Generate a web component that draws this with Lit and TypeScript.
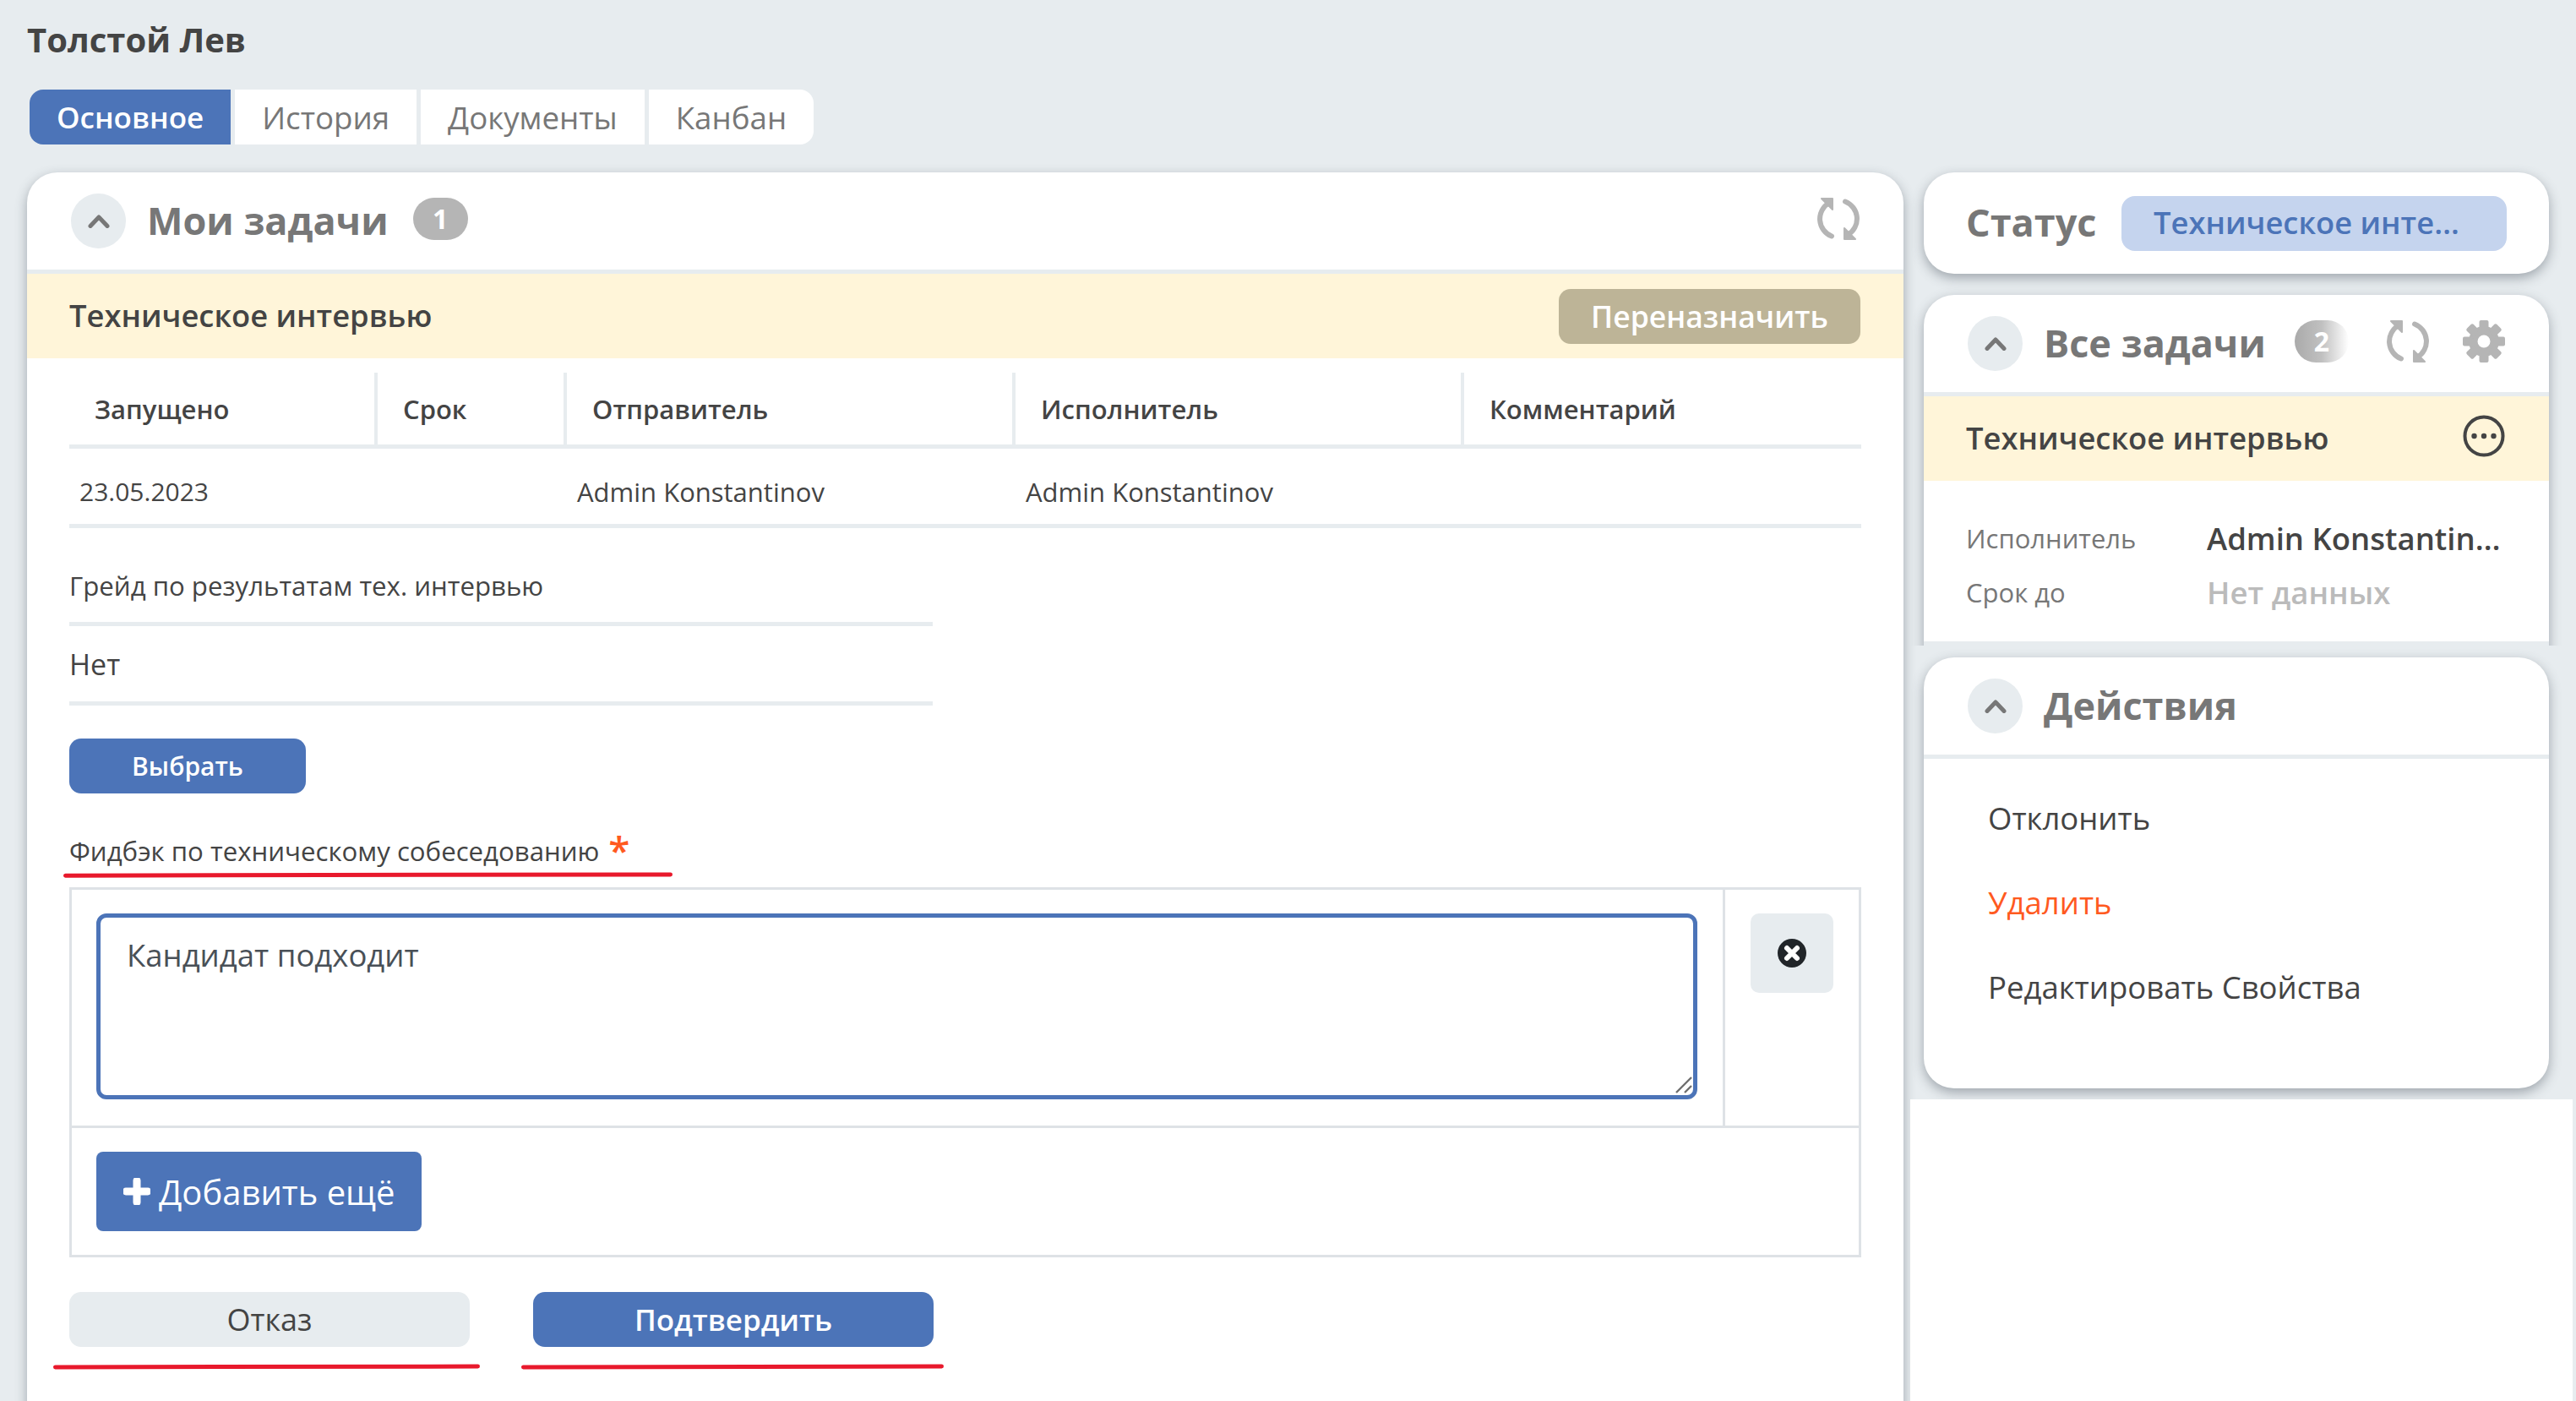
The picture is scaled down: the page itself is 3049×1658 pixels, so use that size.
import { LitElement, html, css, svg } from 'lit';
import { customElement } from 'lit/decorators.js';

const refreshIcon = html`<svg class="ico" viewBox="0 0 50 50" fill="none">
  <g>
    <path d="M14 6A22 22 0 0 0 17 45.5" stroke="#b5b5b5" stroke-width="6" stroke-linecap="round"></path>
    <path d="M5 1H18V14Z" fill="#b5b5b5" stroke="#b5b5b5" stroke-width="2" stroke-linejoin="round"></path>
  </g>
  <g transform="rotate(180 25 25)">
    <path d="M14 6A22 22 0 0 0 17 45.5" stroke="#b5b5b5" stroke-width="6" stroke-linecap="round"></path>
    <path d="M5 1H18V14Z" fill="#b5b5b5" stroke="#b5b5b5" stroke-width="2" stroke-linejoin="round"></path>
  </g>
</svg>`;

const gearIcon = html`<svg class="ico" viewBox="0 0 50 50">
  <circle cx="25" cy="25" r="18" fill="#b5b5b5"></circle>
  ${[0, 45, 90, 135, 180, 225, 270, 315].map(
    (a) => svg`<rect x="19.5" y="0" width="11" height="12" rx="2" fill="#b5b5b5" transform="rotate(${a} 25 25)"></rect>`
  )}
  <circle cx="25" cy="25" r="7.5" fill="#fff"></circle>
</svg>`;

const chevron = html`<svg class="chev" viewBox="0 0 26 16" fill="none">
  <path d="M3 13.5L13 3L23 13.5" stroke="#777" stroke-width="5" stroke-linecap="round" stroke-linejoin="round"></path>
</svg>`;

@customElement('app-root')
export class AppRoot extends LitElement {
  static styles = css`
    :host {
      display: block;
      width: 3049px;
      height: 1658px;
      overflow: hidden;
      background: #e7ecef;
      font-family: 'Open Sans', 'Noto Sans', sans-serif;
      color: #444;
      --blue: #4c74b8;
      --line: #e7ecef;
      --cream: #fff5d9;
      --shadow: 0 5px 14px rgba(60, 70, 80, 0.42);
    }
    * { box-sizing: border-box; }

    .person {
      height: 106px;
      padding: 27px 0 0 32px;
      font-size: 40px;
      line-height: 40px;
      font-weight: 700;
      color: #444;
    }
    .tabs { display: flex; gap: 5px; margin-left: 35px; height: 65px; }
    .tab {
      display: flex;
      align-items: center;
      padding: 0 32px;
      background: #fff;
      color: #777;
      font-size: 36.7px;
    }
    .tab.active { background: var(--blue); color: #fff; font-size: 35px; font-weight: 600; border-radius: 16px 0 0 16px; }
    .tab:last-child { border-radius: 0 16px 16px 0; }

    .columns { display: flex; margin-top: 33px; align-items: flex-start; }

    .card { background: #fff; border-radius: 36px; box-shadow: var(--shadow); overflow: hidden; }
    .main { width: 2221px; margin-left: 32px; min-height: 1500px; flex: none; }

    .head {
      display: flex;
      align-items: center;
      height: 120px;
      padding: 0 52px;
      border-bottom: 5px solid var(--line);
    }
    .collapse {
      width: 65px;
      height: 65px;
      border-radius: 50%;
      background: var(--line);
      display: flex;
      align-items: center;
      justify-content: center;
      flex: none;
    }
    .chev { width: 26px; height: 16px; }
    .head-title { margin: -3px 0 0 25px; font-size: 45px; font-weight: 700; color: #777; white-space: nowrap; }
    .count {
      width: 65px;
      height: 50px;
      margin-left: 29px;
      margin-top: -6px;
      border-radius: 25px;
      background: #b5b5b5;
      color: #fff;
      font-size: 32px;
      font-weight: 700;
      display: flex;
      align-items: center;
      justify-content: center;
    }
    .count.fade { background: linear-gradient(90deg, #aaa 0%, #c0c0c0 50%, #fff 100%); margin-left: 34px; width: 64px; }
    .spacer { flex: 1; }
    .ico { width: 50px; height: 50px; flex: none; margin-top: -6px; }

    .task-bar {
      display: flex;
      align-items: center;
      justify-content: space-between;
      height: 100px;
      background: var(--cream);
      padding: 0 51px 0 50px;
      font-size: 36.3px;
      font-weight: 600;
      color: #444;
    }
    .task-bar > span { margin-top: -3px; }
    .reassign {
      width: 357px;
      height: 65px;
      border-radius: 14px;
      background: #bdb497;
      color: #fff;
      display: flex;
      align-items: center;
      justify-content: center;
      font-size: 35.5px;
      font-weight: 600;
    }

    .table { margin: 17px 50px 0; }
    .tr { display: grid; grid-template-columns: 365px 224px 531px 531px 1fr; }
    .th {
      height: 85px;
      padding: 0 0 0 30px;
      display: flex;
      align-items: center;
      font-size: 31px;
      font-weight: 600;
      border-right: 4px solid var(--line);
    }
    .th:last-child { border-right: 0; }
    .tr.top { border-bottom: 5px solid var(--line); }
    .tr.body { border-bottom: 5px solid var(--line); height: 94px; padding-top: 12px; }
    .td { padding-left: 12px; display: flex; align-items: center; font-size: 31px; }
    .td.date { font-size: 30px; }

    .body-pad { padding: 0 50px; }
    .field { width: 1022px; }
    .field-label {
      margin-top: 48px;
      line-height: 40px;
      font-size: 31.2px;
      font-weight: 500;
    }
    .field .field-label { padding-bottom: 23px; border-bottom: 5px solid var(--line); height: 68px; }
    .field-value {
      height: 94px;
      border-bottom: 5px solid var(--line);
      display: flex;
      align-items: center;
      font-size: 34px;
    }
    .btn {
      height: 65px;
      border-radius: 14px;
      display: flex;
      align-items: center;
      justify-content: center;
      font-size: 30px;
      font-weight: 600;
    }
    .btn.blue { background: var(--blue); color: #fff; }
    .pick { width: 280px; margin-top: 39px; }

    .required { position: relative; width: max-content; padding-right: 87px; }
    .star { position: absolute; right: 51px; top: -5px; color: #ff5a1f; font-size: 46px; font-weight: 600; line-height: 46px; }
    .marked { position: relative; }
    .marked::after {
      content: '';
      position: absolute;
      height: 5px;
      border-radius: 3px;
      background: #e8192c;
      transform: rotate(-0.1deg);
    }
    .required.marked::after { left: -7px; right: 0; bottom: -11px; }

    .repeat {
      margin-top: 23px;
      border: 3px solid #dee2e6;
      display: grid;
      grid-template-columns: 1957px 1fr;
      width: 2121px;
    }
    .cell-text { padding: 28px 29px; border-right: 3px solid #dee2e6; border-bottom: 3px solid #dee2e6; height: 282px; }
    .cell-del { padding: 28px 0 28px 30px; border-bottom: 3px solid #dee2e6; }
    .ta-wrap { position: relative; width: 1895px; height: 220px; }
    .grip { position: absolute; right: 5px; bottom: 5px; width: 30px; height: 30px; }
    textarea {
      display: block;
      width: 100%;
      height: 100%;
      border: 5px solid var(--blue);
      border-radius: 12px;
      padding: 18px 31px;
      font: 36.5px/52px 'Open Sans', sans-serif;
      color: #495057;
      outline: none;
      resize: none;
    }
    .del {
      width: 98px;
      height: 94px;
      border-radius: 10px;
      background: var(--line);
      display: flex;
      align-items: center;
      justify-content: center;
    }
    .del svg { width: 34px; height: 34px; }
    .cell-add { grid-column: 1 / 3; padding: 28px 29px 28px; height: 150px; }
    .add {
      width: 385px;
      height: 94px;
      border-radius: 8px;
      background: var(--blue);
      color: #fff;
      display: flex;
      align-items: center;
      padding-left: 32px;
      gap: 10px;
      font-size: 40px;
    }
    .add svg { width: 32px; height: 32px; flex: none; }

    .actions { display: flex; gap: 75px; margin-top: 41px; }
    .actions .btn { width: 474px; font-size: 35px; }
    .actions .btn.grey { background: var(--line); font-weight: 500; font-size: 36px; }
    .actions .marked::after { height: 5px; bottom: -26px; left: -19px; right: -12px; }
    .actions .blue.marked::after { left: -14px; }

    .side { width: 784px; margin-left: 8px; flex: none; height: 1454px; display: flex; flex-direction: column; }
    .side-card { margin: 0 28px 0 16px; flex: none; }
    .status {
      height: 120px;
      display: flex;
      align-items: center;
      padding: 0 50px;
    }
    .status-label { width: 184px; flex: none; font-size: 45px; font-weight: 700; color: #777; margin-top: -3px; }
    .pill {
      width: 456px;
      height: 65px;
      padding: 0 37px 0 38px;
      border-radius: 16px;
      background: #c5d4ee;
      color: var(--blue);
      font-size: 36.3px;
      font-weight: 600;
      line-height: 63px;
      white-space: nowrap;
      overflow: hidden;
      text-overflow: ellipsis;
    }
    .clip { margin-top: 9px; height: 431px; flex: none; overflow: hidden; padding: 16px 28px 0 16px; }
    .clip .card { height: 460px; }
    .tasks .ico + .ico { margin-left: 40px; }
    .kebab { width: 50px; height: 50px; flex: none; margin-top: -6px; margin-right: 1px; }
    .details { height: 195px; padding: 36px 50px 0; border-bottom: 5px solid var(--line); }
    .dl { display: grid; grid-template-columns: 285px 348px; height: 64px; align-items: center; }
    .dt { font-size: 31px; color: #777; }
    .dd { font-size: 36.5px; font-weight: 600; color: #444; white-space: nowrap; overflow: hidden; text-overflow: ellipsis; }
    .dd.empty { color: #bbb; }

    .actions-card { margin-top: 14px; height: 510px; }
    .menu { padding: 20px 0 0 76px; }
    .menu div { height: 100px; display: flex; align-items: center; font-size: 36.5px; color: #444; }
    .menu .danger { color: #ff5a1f; }

    .blank { background: #fff; flex: 1; margin-top: 13px; }
  `;

  render() {
    return html`
      <div class="person">Толстой Лев</div>
      <div class="tabs">
        <div class="tab active">Основное</div>
        <div class="tab">История</div>
        <div class="tab">Документы</div>
        <div class="tab">Канбан</div>
      </div>
      <div class="columns">
        <section class="card main">
          <div class="head">
            <div class="collapse">${chevron}</div>
            <div class="head-title">Мои задачи</div>
            <div class="count">1</div>
            <div class="spacer"></div>
            ${refreshIcon}
          </div>
          <div class="task-bar">
            <span>Техническое интервью</span>
            <div class="reassign">Переназначить</div>
          </div>
          <div class="table">
            <div class="tr top">
              <div class="th">Запущено</div>
              <div class="th">Срок</div>
              <div class="th">Отправитель</div>
              <div class="th">Исполнитель</div>
              <div class="th">Комментарий</div>
            </div>
            <div class="tr body">
              <div class="td date">23.05.2023</div>
              <div class="td"></div>
              <div class="td">Admin Konstantinov</div>
              <div class="td">Admin Konstantinov</div>
              <div class="td"></div>
            </div>
          </div>
          <div class="body-pad">
            <div class="field">
              <div class="field-label">Грейд по результатам тех. интервью</div>
              <div class="field-value">Нет</div>
            </div>
            <div class="btn blue pick">Выбрать</div>
            <div class="field-label required marked">
              Фидбэк по техническому собеседованию<span class="star">*</span>
            </div>
            <div class="repeat">
              <div class="cell-text">
                <div class="ta-wrap">
                  <textarea readonly>Кандидат подходит</textarea>
                  <svg class="grip" viewBox="0 0 30 30" fill="none">
                    <path d="M28 9L10 27M28 19L20 27" stroke="#6e6e6e" stroke-width="2.4"></path>
                  </svg>
                </div>
              </div>
              <div class="cell-del">
                <div class="del">
                  <svg viewBox="0 0 34 34">
                    <circle cx="17" cy="17" r="17" fill="#212529"></circle>
                    <path d="M11 11L23 23M23 11L11 23" stroke="#fff" stroke-width="6" stroke-linecap="round"></path>
                  </svg>
                </div>
              </div>
              <div class="cell-add">
                <div class="add">
                  <svg viewBox="0 0 32 32"><path d="M16 3V29M3 16H29" stroke="#fff" stroke-width="9" stroke-linecap="round"></path></svg>
                  <span>Добавить ещё</span>
                </div>
              </div>
            </div>
            <div class="actions">
              <div class="btn grey marked">Отказ</div>
              <div class="btn blue marked">Подтвердить</div>
            </div>
          </div>
        </section>

        <aside class="side">
          <div class="card side-card status">
            <span class="status-label">Статус</span>
            <div class="pill">Техническое интервью</div>
          </div>
          <div class="clip">
            <section class="card tasks">
              <div class="head">
                <div class="collapse">${chevron}</div>
                <div class="head-title">Все задачи</div>
                <div class="count fade">2</div>
                <div class="spacer"></div>
                ${refreshIcon}
                ${gearIcon}
              </div>
              <div class="task-bar">
                <span>Техническое интервью</span>
                <svg class="kebab" viewBox="0 0 50 50" fill="none">
                  <circle cx="25" cy="25" r="22.5" stroke="#444" stroke-width="4"></circle>
                  <circle cx="13.5" cy="25" r="3.2" fill="#444"></circle>
                  <circle cx="25" cy="25" r="3.2" fill="#444"></circle>
                  <circle cx="36.5" cy="25" r="3.2" fill="#444"></circle>
                </svg>
              </div>
              <div class="details">
                <div class="dl"><span class="dt">Исполнитель</span><span class="dd">Admin Konstantinov</span></div>
                <div class="dl"><span class="dt">Срок до</span><span class="dd empty">Нет данных</span></div>
              </div>
            </section>
          </div>
          <section class="card side-card actions-card">
            <div class="head">
              <div class="collapse">${chevron}</div>
              <div class="head-title">Действия</div>
            </div>
            <div class="menu">
              <div>Отклонить</div>
              <div class="danger">Удалить</div>
              <div>Редактировать Свойства</div>
            </div>
          </section>
          <div class="blank"></div>
        </aside>
      </div>
    `;
  }
}

declare global {
  interface HTMLElementTagNameMap {
    'app-root': AppRoot;
  }
}
